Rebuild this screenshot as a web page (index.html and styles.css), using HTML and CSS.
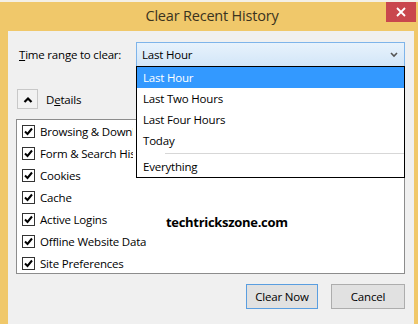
FILE: index.html
```html
<!DOCTYPE html>
<html>
<head lang="en">
    <meta charset="UTF-8">
    <title>Clear Recent History</title>
    <link rel="stylesheet" href="styles.css">
</head>
<body>
    <div class="window">
        <div class="titlebar">
            <span class="title">Clear Recent History</span>
            <span class="close">
                <svg width="10" height="10" viewBox="0 0 10 10"><path d="M1 1L9 9M9 1L1 9" stroke="#fff" stroke-width="1.8"/></svg>
            </span>
        </div>
        <div class="client">
            <div class="range-row">
                <span class="label"><u>T</u>ime range to clear:</span>
                <div class="select">
                    <span>Last Hour</span>
                    <svg class="chev" width="8" height="6" viewBox="0 0 8 6"><path d="M1 1L4 4L7 1" fill="none" stroke="#555" stroke-width="1.6"/></svg>
                    <!--下拉列表-->
                    <ul class="dropdown">
                        <li class="current">Last Hour</li>
                        <li>Last Two Hours</li>
                        <li>Last Four Hours</li>
                        <li>Today</li>
                        <li class="sep"></li>
                        <li>Everything</li>
                    </ul>
                </div>
            </div>
            <div class="details-row">
                <span class="toggle">
                    <svg width="10" height="7" viewBox="0 0 10 7"><path d="M1.5 6L5 2.5L8.5 6" fill="none" stroke="#000" stroke-width="2.2"/></svg>
                </span>
                <span>D<u>e</u>tails</span>
            </div>
            <div class="list">
                <div class="item"><span class="check"><svg width="11" height="11" viewBox="0 0 11 11"><path d="M2 5.5L4.5 8L9 2.5" fill="none" stroke="#000" stroke-width="2"/></svg></span><span class="text cut">Browsing &amp; Download History</span></div>
                <div class="item"><span class="check"><svg width="11" height="11" viewBox="0 0 11 11"><path d="M2 5.5L4.5 8L9 2.5" fill="none" stroke="#000" stroke-width="2"/></svg></span><span class="text cut">Form &amp; Search History</span></div>
                <div class="item"><span class="check"><svg width="11" height="11" viewBox="0 0 11 11"><path d="M2 5.5L4.5 8L9 2.5" fill="none" stroke="#000" stroke-width="2"/></svg></span><span class="text">Cookies</span></div>
                <div class="item"><span class="check"><svg width="11" height="11" viewBox="0 0 11 11"><path d="M2 5.5L4.5 8L9 2.5" fill="none" stroke="#000" stroke-width="2"/></svg></span><span class="text">Cache</span></div>
                <div class="item"><span class="check"><svg width="11" height="11" viewBox="0 0 11 11"><path d="M2 5.5L4.5 8L9 2.5" fill="none" stroke="#000" stroke-width="2"/></svg></span><span class="text">Active Logins</span></div>
                <div class="item"><span class="check"><svg width="11" height="11" viewBox="0 0 11 11"><path d="M2 5.5L4.5 8L9 2.5" fill="none" stroke="#000" stroke-width="2"/></svg></span><span class="text">Offline Website Data</span></div>
                <div class="item"><span class="check"><svg width="11" height="11" viewBox="0 0 11 11"><path d="M2 5.5L4.5 8L9 2.5" fill="none" stroke="#000" stroke-width="2"/></svg></span><span class="text">Site Preferences</span></div>
                <span class="mark">techtrickszone.com</span>
            </div>
            <div class="buttons">
                <span class="btn default">Clear Now</span>
                <span class="btn cancel">Cancel</span>
            </div>
        </div>
    </div>
</body>
</html>
```

FILE: styles.css
```css
body, ul, li {
    margin: 0;
    padding: 0;
    list-style: none;
}

body {
    background: #f4f0e6;
    font-family: "Open Sans", "Noto Sans", sans-serif;
    font-size: 11.5px;
    letter-spacing: -0.2px;
    color: #000;
}

.window {
    width: 418px;
    height: 322px;
    margin-top: 2px;
    background: #f0c86a;
    display: flex;
    flex-direction: column;
}

.titlebar {
    height: 29px;
    position: relative;
    display: flex;
    align-items: center;
    justify-content: center;
}

.title {
    font-size: 14.5px;
    letter-spacing: -0.2px;
    color: #3a3320;
    margin-top: -2px;
    margin-left: 6px;
}

.close {
    position: absolute;
    top: 0;
    right: 2px;
    width: 30px;
    height: 20px;
    background: #c9474d;
    display: flex;
    align-items: center;
    justify-content: center;
}

.client {
    flex: 1;
    margin: 0 4px 0 8px;
    background: #f0f0f0;
    padding: 11px 9px 13px 8px;
    display: flex;
    flex-direction: column;
}

.range-row {
    display: flex;
    align-items: center;
    justify-content: space-between;
    padding-left: 3px;
    height: 25px;
}

.select {
    width: 269px;
    height: 25px;
    box-sizing: border-box;
    border: 1px solid #7eb4ea;
    background: linear-gradient(#e8f2fc, #d2e6f8);
    position: relative;
    display: flex;
    align-items: center;
    padding-left: 5px;
}

.chev {
    position: absolute;
    right: 6px;
    top: 9px;
}

.dropdown {
    position: absolute;
    top: 23px;
    left: -1px;
    width: 269px;
    box-sizing: border-box;
    border: 1px solid #000;
    background: #fff;
    z-index: 2;
}

.dropdown li {
    height: 21px;
    line-height: 21px;
    padding-left: 6px;
}

.dropdown li.current {
    background: #3399ff;
    color: #fff;
}

.dropdown li.sep {
    height: 1px;
    margin: 2px 0 2px 28px;
    background: #d7d7d7;
}

.details-row {
    display: flex;
    align-items: center;
    gap: 8px;
    margin-top: 22px;
    margin-left: 1px;
}

.toggle {
    width: 21px;
    height: 20px;
    box-sizing: border-box;
    border: 1px solid #c8c8c8;
    background: #f2f2f2;
    display: flex;
    align-items: center;
    justify-content: center;
}

.list {
    margin-top: 10px;
    height: 155px;
    box-sizing: border-box;
    border: 1px solid #8c8c8c;
    background: #fff;
    padding: 0 0 0 5px;
    position: relative;
    overflow: hidden;
}

.item {
    height: 22px;
    display: flex;
    align-items: center;
    gap: 5px;
}

.text {
    white-space: nowrap;
}

/* 被下拉列表盖住的部分 */
.text.cut {
    max-width: 93px;
    overflow: hidden;
}

.check {
    width: 13px;
    height: 13px;
    box-sizing: border-box;
    border: 1px solid #333;
    display: flex;
    align-items: center;
    justify-content: center;
}

.mark {
    position: absolute;
    left: 149px;
    top: 93px;
    font-size: 13px;
    letter-spacing: -0.3px;
    font-weight: bold;
}

.buttons {
    margin-top: 10px;
    display: flex;
    justify-content: flex-end;
    gap: 13px;
}

.btn {
    height: 25px;
    box-sizing: border-box;
    background: #e1e1e1;
    display: flex;
    align-items: center;
    justify-content: center;
}

.btn.default {
    width: 72px;
    border: 1px solid #5a9ee0;
}

.btn.cancel {
    width: 74px;
    border: 1px solid #adadad;
}
```
